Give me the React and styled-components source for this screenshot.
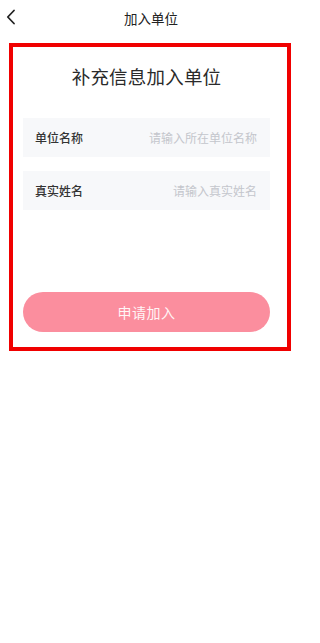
import React from "react";
import styled, { createGlobalStyle } from "styled-components";

const Global = createGlobalStyle`
  html, body { margin: 0; padding: 0; background: #ffffff; }
  body { font-family: "Noto Sans CJK SC", "Noto Sans", sans-serif; color: #333; }
  * { box-sizing: border-box; }
`;

const Page = styled.div`
  width: 300px;
  min-height: 643px;
  background: #fff;
  display: flex;
  flex-direction: column;
`;

const NavBar = styled.div`
  height: 36px;
  display: flex;
  align-items: center;
  justify-content: center;
  position: relative;
`;

const BackButton = styled.button`
  position: absolute;
  left: 4px;
  top: 8px;
  width: 14px;
  height: 18px;
  border: none;
  background: none;
  padding: 0;
  display: flex;
  align-items: center;
  justify-content: center;
`;

const NavTitle = styled.div`
  font-size: 13.5px;
  color: #222;
  line-height: 20px;
  margin-left: 2px;
`;

const Frame = styled.div`
  margin: 7px 9px 0 9px;
  height: 308px;
  border: 4px solid #f00000;
  display: flex;
  flex-direction: column;
  padding: 16px 17px 0 10px;
`;

const Heading = styled.h1`
  margin: 0;
  font-size: 18.5px;
  font-weight: 400;
  line-height: 26px;
  color: #2a2a2a;
  text-align: center;
  letter-spacing: 0.2px;
`;

const Fields = styled.div`
  margin-top: 29px;
  display: flex;
  flex-direction: column;
  gap: 14px;
`;

const FieldRow = styled.label`
  height: 39px;
  background: #f7f8fa;
  display: flex;
  align-items: center;
  padding: 0 13px 0 12px;
`;

const FieldLabel = styled.span`
  font-size: 12px;
  font-weight: 500;
  color: #333;
  white-space: nowrap;
`;

const FieldInput = styled.input`
  flex: 1;
  min-width: 0;
  border: none;
  outline: none;
  background: transparent;
  text-align: right;
  font-family: inherit;
  font-size: 12px;
  color: #333;
  padding: 0;
  &::placeholder { color: #c4c6cc; }
`;

const SubmitButton = styled.button`
  margin-top: 82px;
  height: 40px;
  border: none;
  border-radius: 20px;
  background: #fb8e9e;
  color: #fff5f6;
  font-family: inherit;
  font-size: 14px;
  letter-spacing: 0.5px;
`;

export default function App() {
  return (
    <>
      <Global />
      <Page>
        <NavBar>
          <BackButton aria-label="返回">
            <svg width="10" height="16" viewBox="0 0 10 16">
              <polyline points="8,1.5 1.8,8 8,14.5" fill="none" stroke="#222" strokeWidth="1.8" strokeLinecap="round" strokeLinejoin="round" />
            </svg>
          </BackButton>
          <NavTitle>加入单位</NavTitle>
        </NavBar>
        <Frame>
          <Heading>补充信息加入单位</Heading>
          <Fields>
            <FieldRow>
              <FieldLabel>单位名称</FieldLabel>
              <FieldInput placeholder="请输入所在单位名称" />
            </FieldRow>
            <FieldRow>
              <FieldLabel>真实姓名</FieldLabel>
              <FieldInput placeholder="请输入真实姓名" />
            </FieldRow>
          </Fields>
          <SubmitButton>申请加入</SubmitButton>
        </Frame>
      </Page>
    </>
  );
}
